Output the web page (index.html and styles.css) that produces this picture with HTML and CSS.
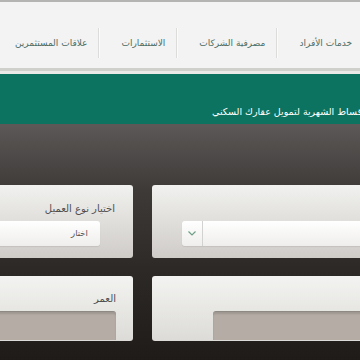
FILE: index.html
```html
<!DOCTYPE html>
<html lang="ar">
<head>
	<meta charset="UTF-8" />
	<title>حاسبة التمويل العقاري</title>
	<link rel="stylesheet" href="styles.css">
</head>
<body>
<div class="nav">
	<ul>
		<li>خدمات الأفراد</li>
		<li>مصرفية الشركات</li>
		<li>الاستثمارات</li>
		<li>علاقات المستثمرين</li>
	</ul>
</div>
<div class="banner">
	<h2 dir="rtl">احسب الأقساط الشهرية لتمويل عقارك السكني</h2>
</div>
<div class="calc">
	<div class="card">
		<label></label>
		<div class="select">
			<span class="text"></span>
			<span class="arrow"><svg width="8" height="5" viewBox="0 0 8 5"><path d="M0.5 0.5 L4 4 L7.5 0.5" fill="none" stroke="#6f9f86" stroke-width="1.2"/></svg></span>
		</div>
	</div>
	<div class="card">
		<label>اختيار نوع العميل</label>
		<div class="select">
			<span class="text">اختار</span>
			<span class="arrow"><svg width="8" height="5" viewBox="0 0 8 5"><path d="M0.5 0.5 L4 4 L7.5 0.5" fill="none" stroke="#6f9f86" stroke-width="1.2"/></svg></span>
		</div>
	</div>
	<div class="card low">
		<label></label>
		<div class="field"></div>
	</div>
	<div class="card low">
		<label>العمر</label>
		<div class="field"></div>
	</div>
</div>
</body>
</html>
```

FILE: styles.css
```css
html,body{overflow-x:hidden;}
body{margin:0;height:360px;font-family:"DejaVu Sans",sans-serif;background:linear-gradient(#5c5857 125px,#3e3a38 190px,#2d2927 270px,#1f1b19 360px);}
.nav{height:66px;border-top:2px solid #b4b4b2;background:#f3f3f3;border-bottom:3px solid #cfcfcb;box-shadow:0 3px 0 #e9e9e7;direction:rtl;}
.nav ul{margin:0;padding:26px 8px 0 0;list-style:none;display:flex;white-space:nowrap;}
.nav li{font-size:9px;line-height:30px;color:#4d6d64;padding:0 11px 0 22px;border-right:1px solid #dcdcda;box-shadow:1px 0 0 #fbfbfb;}
.nav li:first-child{border-right:0;box-shadow:none;padding-right:0;}
.banner{margin-top:3px;height:50px;background:#0c7360;direction:ltr;padding-left:212px;white-space:nowrap;overflow:hidden;}
.banner h2{margin:0;padding-top:30px;font-size:9.5px;font-weight:normal;line-height:16px;color:#fff;display:inline-block;}
.calc{direction:rtl;display:grid;grid-template-columns:300px 240px;column-gap:19px;row-gap:18px;width:559px;margin-left:-107px;padding-top:61px;}
.card{height:73px;box-sizing:border-box;padding:17px 18px 0 30px;border-radius:3px;background:linear-gradient(#f1f1ef,#cfccc8);}
.card label{display:block;min-height:14px;font-size:10px;line-height:14px;color:#4f4f4f;margin-bottom:5px;}
.select{display:flex;height:25px;margin-right:15px;border-radius:3px;background:linear-gradient(#ffffff,#efeeec);box-shadow:0 1px 1px rgba(0,0,0,0.08);}
.select .text{flex:1;font-size:8.5px;line-height:25px;color:#555;padding-right:12px;}
.select .arrow{width:20px;border-right:1px solid #d2d2d0;display:flex;align-items:center;justify-content:center;}
.card.low{height:65px;padding:16px 17px 0 61px;background:linear-gradient(#f3f3f1,#dcdbd7);}
.field{height:29px;box-sizing:border-box;border-radius:3px 3px 0 0;background:#b4aca5;border-top:1px solid #8f8983;box-shadow:inset 0 2px 2px rgba(0,0,0,0.12);}
```
